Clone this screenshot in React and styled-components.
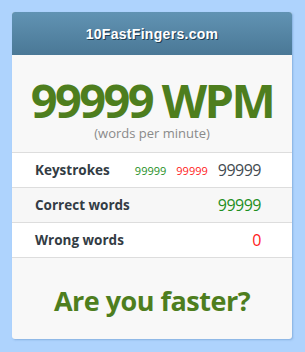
import React from 'react';
import styled, { createGlobalStyle } from 'styled-components';

const GlobalStyle = createGlobalStyle`
  html, body {
    margin: 0;
    padding: 0;
    background: #aed3fd;
  }
`;

const Page = styled.div`
  width: 305px;
  height: 352px;
  padding: 12px 13px 0 12px;
  box-sizing: border-box;
`;

const Card = styled.div`
  width: 280px;
  height: 327px;
  background: #f8f8f8;
  border-radius: 3px;
  box-shadow: 1px 1px 2px rgba(60, 110, 170, 0.35);
  overflow: hidden;
  display: flex;
  flex-direction: column;
`;

const Header = styled.div`
  height: 43px;
  background: linear-gradient(to bottom, #6193b3, #4a7896);
  color: #fff;
  display: flex;
  align-items: center;
  justify-content: center;
  font-family: "Liberation Sans", Arial, sans-serif;
  font-weight: bold;
  font-size: 14px;
  letter-spacing: 0.3px;
  text-shadow: 1px 1px 0 #1f3d52;
`;

const Score = styled.div`
  height: 97px;
  border-bottom: 1px solid #dddddd;
  display: flex;
  flex-direction: column;
  align-items: center;
  font-family: "Open Sans", sans-serif;
`;

const Wpm = styled.div`
  color: #4e7e1e;
  font-size: 47px;
  font-weight: 700;
  letter-spacing: -2.6px;
  line-height: 52px;
  margin-top: 19px;
`;

const Sub = styled.div`
  color: #8a8a8a;
  font-size: 13px;
  line-height: 14px;
`;

const Row = styled.div`
  height: 34px;
  border-bottom: 1px solid #dddddd;
  background: ${({ $alt }) => ($alt ? '#f7f7f7' : '#ffffff')};
  display: flex;
  align-items: center;
  padding: 0 31px 0 23px;
  font-family: "Open Sans", sans-serif;
`;

const Label = styled.span`
  flex: 1;
  color: #333c44;
  font-weight: 700;
  font-size: 13.5px;
`;

const Small = styled.span`
  font-size: 11px;
  margin-right: 10px;
  color: ${({ $color }) => $color};
`;

const Value = styled.span`
  font-size: 16px;
  letter-spacing: -0.5px;
  color: ${({ $color }) => $color || '#444b52'};
`;

const Footer = styled.div`
  flex: 1;
  display: flex;
  align-items: center;
  justify-content: center;
  padding-top: 4px;
  font-family: "Open Sans", sans-serif;
  color: #4e7e1e;
  font-weight: 700;
  font-size: 27px;
  letter-spacing: -0.5px;
`;

export default function App() {
  return (
    <Page>
      <GlobalStyle />
      <Card>
        <Header>10FastFingers.com</Header>
        <Score>
          <Wpm>99999 WPM</Wpm>
          <Sub>(words per minute)</Sub>
        </Score>
        <Row>
          <Label>Keystrokes</Label>
          <Small $color="#1e8f1e">99999</Small>
          <Small $color="#ff1a1a">99999</Small>
          <Value>99999</Value>
        </Row>
        <Row $alt>
          <Label>Correct words</Label>
          <Value $color="#1e8f1e">99999</Value>
        </Row>
        <Row>
          <Label>Wrong words</Label>
          <Value $color="#ff1a1a">0</Value>
        </Row>
        <Footer>Are you faster?</Footer>
      </Card>
    </Page>
  );
}
